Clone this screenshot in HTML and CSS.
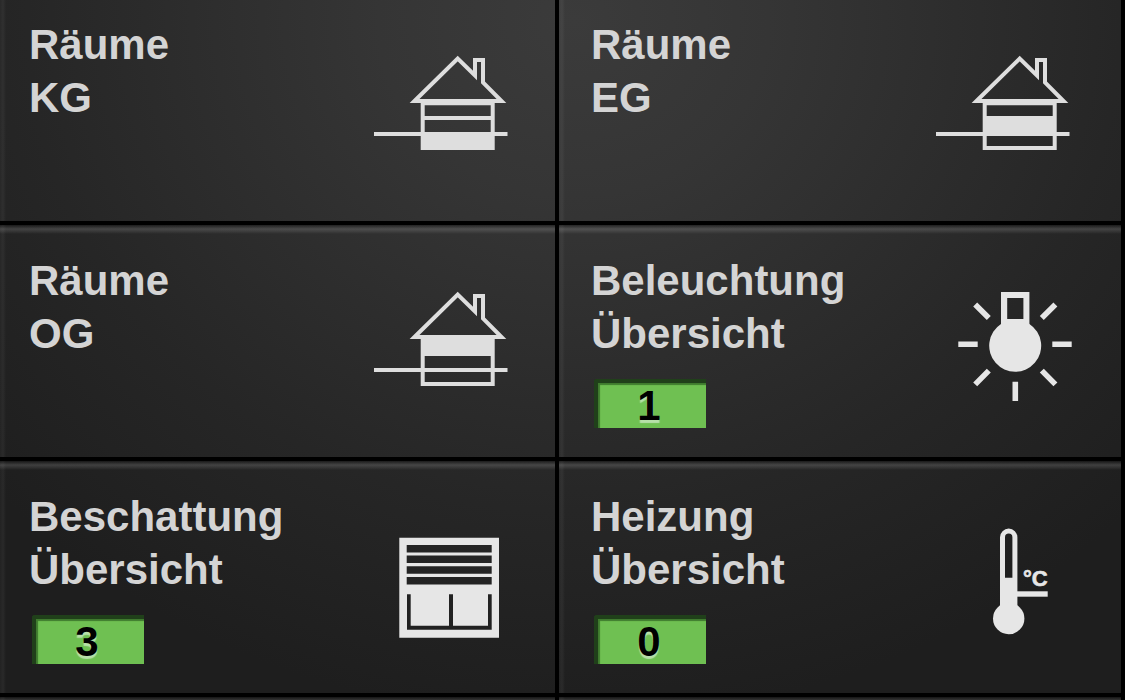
FILE: index.html
```html
<!DOCTYPE html>
<html lang="de">
<head>
  <meta charset="UTF-8">
  <title>Räume</title>
  <link rel="stylesheet" href="styles.css">
</head>
<body>
  <!-- shared parts of the house icons -->
  <svg class="defs" width="0" height="0" aria-hidden="true">
    <symbol id="house" viewBox="0 0 150 150">
      <g fill="none" stroke="currentColor" stroke-width="4">
        <path d="M44.5 62 L87.7 19.6 L105 36.5 V21 H113 V43.5 L131.5 62 Z"/>
        <path d="M52.7 62 V109 H122.7 V62 M52.7 64.3 H122.7"/>
        <path d="M4 95 H137.5"/>
      </g>
    </symbol>
  </svg>

  <nav class="tiles">
    <a class="tile" href="#kg">
      <span class="tile-text">
        <span class="title">Räume<br>KG</span>
      </span>
      <svg class="icon" viewBox="0 0 150 150" aria-hidden="true">
        <use href="#house"/>
        <path d="M52 77 H123 V81 H52 Z M52 94 H123 V110 H52 Z" fill="currentColor"/>
      </svg>
    </a>

    <a class="tile" href="#eg">
      <span class="tile-text">
        <span class="title">Räume<br>EG</span>
      </span>
      <svg class="icon" viewBox="0 0 150 150" aria-hidden="true">
        <use href="#house"/>
        <path d="M52 77 H123 V97 H52 Z" fill="currentColor"/>
      </svg>
    </a>

    <a class="tile" href="#og">
      <span class="tile-text">
        <span class="title">Räume<br>OG</span>
      </span>
      <svg class="icon" viewBox="0 0 150 150" aria-hidden="true">
        <use href="#house"/>
        <path d="M52 63 H123 V81 H52 Z" fill="currentColor"/>
      </svg>
    </a>

    <a class="tile" href="#beleuchtung">
      <span class="tile-text">
        <span class="title">Beleuchtung<br>Übersicht</span>
        <span class="badge">1</span>
      </span>
      <svg class="icon icon-bright" viewBox="0 0 150 150" aria-hidden="true">
        <path d="M69 17 H97.4 V60 H69 Z M75.2 23 V44 H91.4 V23 Z" fill="currentColor" fill-rule="evenodd"/>
        <path d="M69 49 A26 26 0 1 0 97.4 49 L91.4 44 H75.2 Z" fill="currentColor"/>
        <path d="M26.3 69.3 H45.7 M120.3 69.3 H139.7 M83.3 106.7 V126 M43.2 29.4 L56.8 43 M123.4 29.4 L109.8 43 M56.8 95.6 L43.2 109.4 M109.8 95.6 L123.4 109.4" fill="none" stroke="currentColor" stroke-width="5.6"/>
      </svg>
    </a>

    <a class="tile" href="#beschattung">
      <span class="tile-text">
        <span class="title">Beschattung<br>Übersicht</span>
        <span class="badge">3</span>
      </span>
      <svg class="icon icon-bright" viewBox="0 0 150 150" aria-hidden="true">
        <path fill="currentColor" fill-rule="evenodd" d="M29.3 26.7 H129 V126.7 H29.3 Z
          M36.7 34 V41.4 H121.7 V34 Z M36.7 44.6 V52 H121.7 V44.6 Z
          M36.7 55.3 V62.7 H121.7 V55.3 Z M36.7 66 V73.4 H121.7 V66 Z
          M37 83.3 V118.7 H121.7 V83.3 H118 V114.8 H83 V83.3 H79 V114.8 H40.7 V83.3 Z"/>
      </svg>
    </a>

    <a class="tile" href="#heizung">
      <span class="tile-text">
        <span class="title">Heizung<br>Übersicht</span>
        <span class="badge">0</span>
      </span>
      <svg class="icon icon-bright" viewBox="0 0 150 150" aria-hidden="true">
        <path fill="currentColor" fill-rule="evenodd" d="M68 100 V26.3 A8.7 8.7 0 0 1 85.4 26.3 V100 Z
          M73 66.7 H80.4 V26.3 A3.7 3.7 0 0 0 73 26.3 Z"/>
        <circle cx="76.7" cy="107.5" r="15.7" fill="currentColor"/>
        <path d="M84 83 H115.7" stroke="currentColor" stroke-width="5.4"/>
        <text class="unit" x="91" y="75">°C</text>
      </svg>
    </a>

    <a class="tile" href="#weiter-links" aria-label="Weiter"></a>
    <a class="tile" href="#weiter-rechts" aria-label="Weiter"></a>
  </nav>
</body>
</html>
```

FILE: styles.css
```css
body {
  margin: 0;
  height: 100vh;
  overflow: hidden;
  background-color: #000;
  font-family: "Liberation Sans", Arial, Helvetica, sans-serif;
}

.defs {
  position: absolute;
}

/* the list is scrolled a little, so the first row is cut at the top */
.tiles {
  display: grid;
  grid-template-columns: 555fr 562fr;
  grid-template-rows: repeat(3, 232px) minmax(0, 1fr);
  gap: 4px;
  height: calc(100vh + 11px);
  margin-top: -11px;
  padding-right: 4px;
}

.tile {
  display: flex;
  justify-content: space-between;
  align-items: flex-start;
  box-sizing: border-box;
  padding: 29px 35px 0 29px;
  color: #d4d4d4;
  text-decoration: none;
  background:
    linear-gradient(to bottom, rgba(0,0,0,0.3) 0, rgba(255,255,255,0.14) 4px, rgba(255,255,255,0.09) 6px, transparent 9px),
    linear-gradient(to right, rgba(255,255,255,0.02) 0, rgba(255,255,255,0.05) 3px, transparent 6px),
    radial-gradient(ellipse 780px 700px at 51% 3%, #3b3b3b 0, #353535 25%, #262626 70%, #1e1e1e 100%) fixed;
}

.tile:nth-child(even) {
  padding-right: 39px;
  padding-left: 32px;
}

.tile:nth-child(n+7) {
  padding: 0;
}

.tile-text {
  display: flex;
  flex-direction: column;
  align-items: flex-start;
}

.title {
  font-size: 42px;
  font-weight: bold;
  line-height: 53px;
}

.badge {
  box-sizing: border-box;
  width: 112px;
  height: 49px;
  margin: 19px 0 0 3px;
  padding-right: 6px;
  border-top: 4px solid #20401a;
  border-left: 4px solid #20401a;
  border-top-left-radius: 3px;
  background-color: #6fc052;
  box-shadow: inset 2px 2px 1px #3f7a2e;
  color: #000;
  font-size: 42px;
  font-weight: bold;
  line-height: 45px;
  text-align: center;
  text-shadow: 0 3px 1px rgba(255,255,255,0.5);
}

.icon {
  flex: none;
  width: 150px;
  height: 150px;
  margin-top: 21px;
  color: #dedede;
}

.icon-bright {
  color: #e6e6e6;
}

.unit {
  fill: currentColor;
  stroke: currentColor;
  stroke-width: 0.6;
  font-size: 22px;
  font-weight: bold;
}
```
